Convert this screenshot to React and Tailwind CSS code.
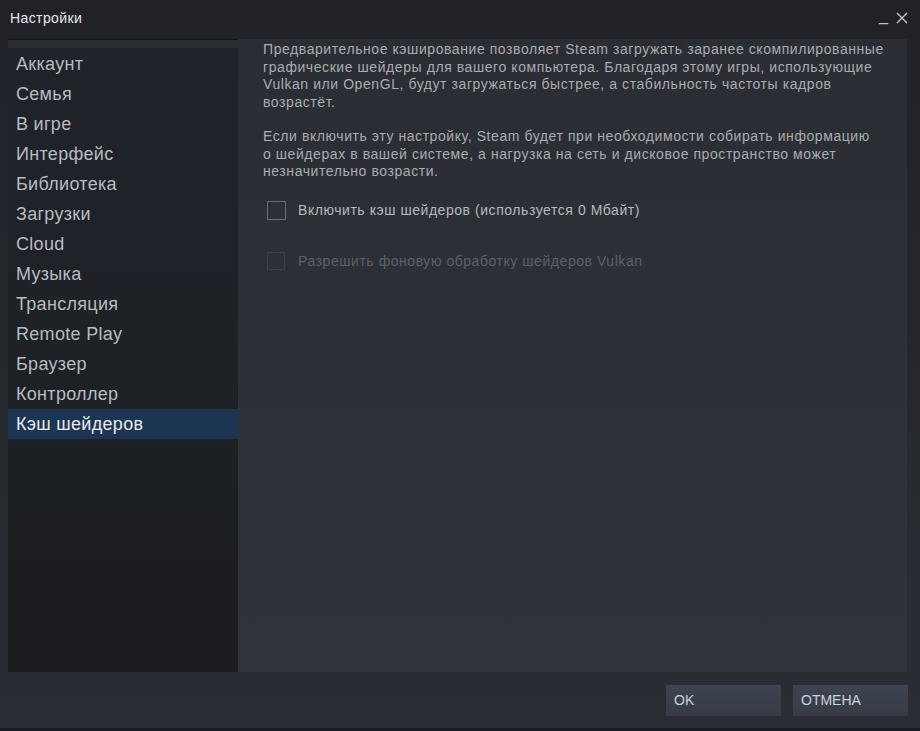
import React from "react";

const items = ["Аккаунт","Семья","В игре","Интерфейс","Библиотека","Загрузки","Cloud","Музыка","Трансляция","Remote Play","Браузер","Контроллер","Кэш шейдеров"];

export default function App() {
  return (
    <div className="w-[920px] h-[731px] bg-[#1a1c26] overflow-hidden" style={{fontFamily: '"Liberation Sans", Arial, sans-serif'}}>
      <div className="h-[728px] flex flex-col bg-gradient-to-b from-[#202227] to-[#2a2d33]">
        <div className="h-[39px] flex items-start justify-between pl-[10px] pr-[12px] pt-[10px]">
          <span className="text-[14px] leading-[16px] tracking-[0.4px] text-[#e6e7e8]">Настройки</span>
          <div className="flex items-center gap-[8px] text-[#c0c3c6] -mt-[4px]">
            <span className="text-[16px] leading-[20px]">_</span>
            <svg width="12" height="12" viewBox="0 0 12 12" className="mt-[3px]"><path d="M1 1L11 11M11 1L1 11" stroke="#c8cbce" strokeWidth="1.3"/></svg>
          </div>
        </div>
        <div className="flex h-[633px] pl-[8px] pr-[13px]">
          <div className="w-[230px] border-t border-[#15171a] bg-gradient-to-b from-[#20232a] via-[#1e2126] to-[#1a1c1f] flex flex-col">
            <div className="h-[8px] bg-[#2a2d34]"></div>
            <div className="h-[1px]"></div>
            {items.map((t, i) => (
              <div key={t} className={`h-[30px] flex items-center pl-[8px] text-[18px] tracking-[0.3px] ${i === items.length - 1 ? "bg-[#1b3553] text-[#e8eaec]" : "text-[#b8bcc0]"}`}>{t}</div>
            ))}
          </div>
          <div className="flex-1 bg-gradient-to-b from-[#2a2d33] to-[#30333a] pl-[25px] pt-[2px]">
            <p className="text-[14px] leading-[17.5px] tracking-[0.57px] text-[#a9acb0] whitespace-nowrap">
              Предварительное кэширование позволяет Steam загружать заранее скомпилированные<br/>
              графические шейдеры для вашего компьютера. Благодаря этому игры, использующие<br/>
              Vulkan или OpenGL, будут загружаться быстрее, а стабильность частоты кадров<br/>
              возрастёт.
            </p>
            <p className="mt-[17px] text-[14px] leading-[17.5px] tracking-[0.57px] text-[#a9acb0] whitespace-nowrap">
              Если включить эту настройку, Steam будет при необходимости собирать информацию<br/>
              о шейдерах в вашей системе, а нагрузка на сеть и дисковое пространство может<br/>
              незначительно возрасти.
            </p>
            <div className="mt-[19px] flex items-center pl-[4px]">
              <div className="w-[19px] h-[19px] border border-[#6a6d72] bg-[#2c2f35]"></div>
              <span className="ml-[12px] text-[14px] tracking-[0.55px] text-[#b6b9bd]">Включить кэш шейдеров (используется 0 Мбайт)</span>
            </div>
            <div className="mt-[30px] flex items-center pl-[4px]">
              <div className="w-[18px] h-[18px] border border-[#3c3f45] bg-[#2d3036]"></div>
              <span className="ml-[13px] text-[14px] tracking-[0.55px] text-[#5e6167]">Разрешить фоновую обработку шейдеров Vulkan</span>
            </div>
          </div>
        </div>
        <div className="flex justify-end gap-[12px] pr-[12px] pt-[13px]">
          <div className="w-[115px] h-[31px] bg-gradient-to-b from-[#3e4450] to-[#363b45] flex items-center pl-[8px] text-[14px] text-[#c8d2dc]">OK</div>
          <div className="w-[115px] h-[31px] bg-gradient-to-b from-[#3e4450] to-[#363b45] flex items-center pl-[8px] text-[14px] text-[#c8d2dc]">ОТМЕНА</div>
        </div>
      </div>
    </div>
  );
}
